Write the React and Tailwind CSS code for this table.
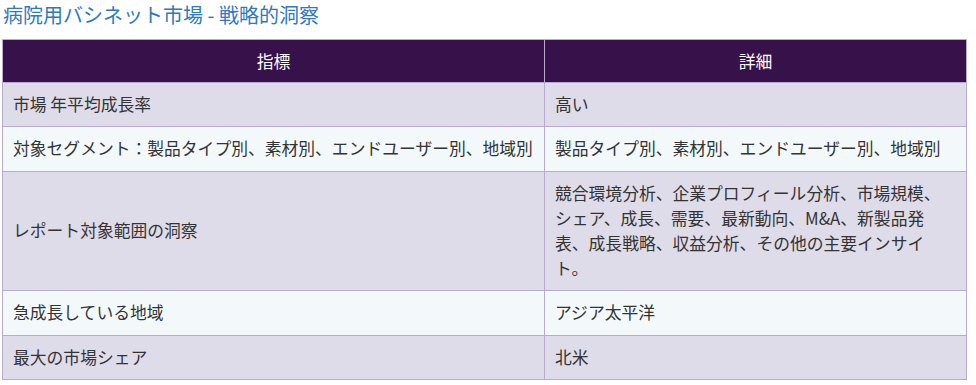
export default function App() {
  const rows = [
    ["市場 年平均成長率", "高い"],
    ["対象セグメント：製品タイプ別、素材別、エンドユーザー別、地域別", "製品タイプ別、素材別、エンドユーザー別、地域別"],
    ["レポート対象範囲の洞察", "競合環境分析、企業プロフィール分析、市場規模、シェア、成長、需要、最新動向、M&A、新製品発表、成長戦略、収益分析、その他の主要インサイト。"],
    ["急成長している地域", "アジア太平洋"],
    ["最大の市場シェア", "北米"],
  ];
  return (
    <div className="bg-white w-[976px] h-[385px] text-[#333333]" style={{ fontFamily: '"Noto Sans CJK JP", "Noto Sans", sans-serif' }}>
      <div className="pl-[3px] pt-[1px] h-[39px] text-[20px] leading-[28px] text-[#2e79bf]">
        病院用バシネット市場 - 戦略的洞察
      </div>
      <table className="ml-[2px] w-[964px] border-collapse text-[16.8px] leading-[1.5] table-fixed">
        <colgroup>
          <col className="w-[542px]" />
          <col className="w-[422px]" />
        </colgroup>
        <thead>
          <tr className="bg-[#37114a] text-white">
            <th className="border border-[#b9abcf] px-[10px] py-[8.5px] font-normal text-center">指標</th>
            <th className="border border-[#b9abcf] px-[10px] py-[8.5px] font-normal text-center">詳細</th>
          </tr>
        </thead>
        <tbody>
          {rows.map((r, i) => (
            <tr key={i} className={i % 2 === 0 ? "bg-[#dfdcea]" : "bg-[#f3f9fb]"}>
              <td className="border border-[#b9abcf] pl-[10px] pr-[6px] py-[9px] align-middle">{r[0]}</td>
              <td className="border border-[#b9abcf] pl-[10px] pr-[10px] py-[9px] align-middle">{r[1]}</td>
            </tr>
          ))}
        </tbody>
      </table>
    </div>
  );
}
